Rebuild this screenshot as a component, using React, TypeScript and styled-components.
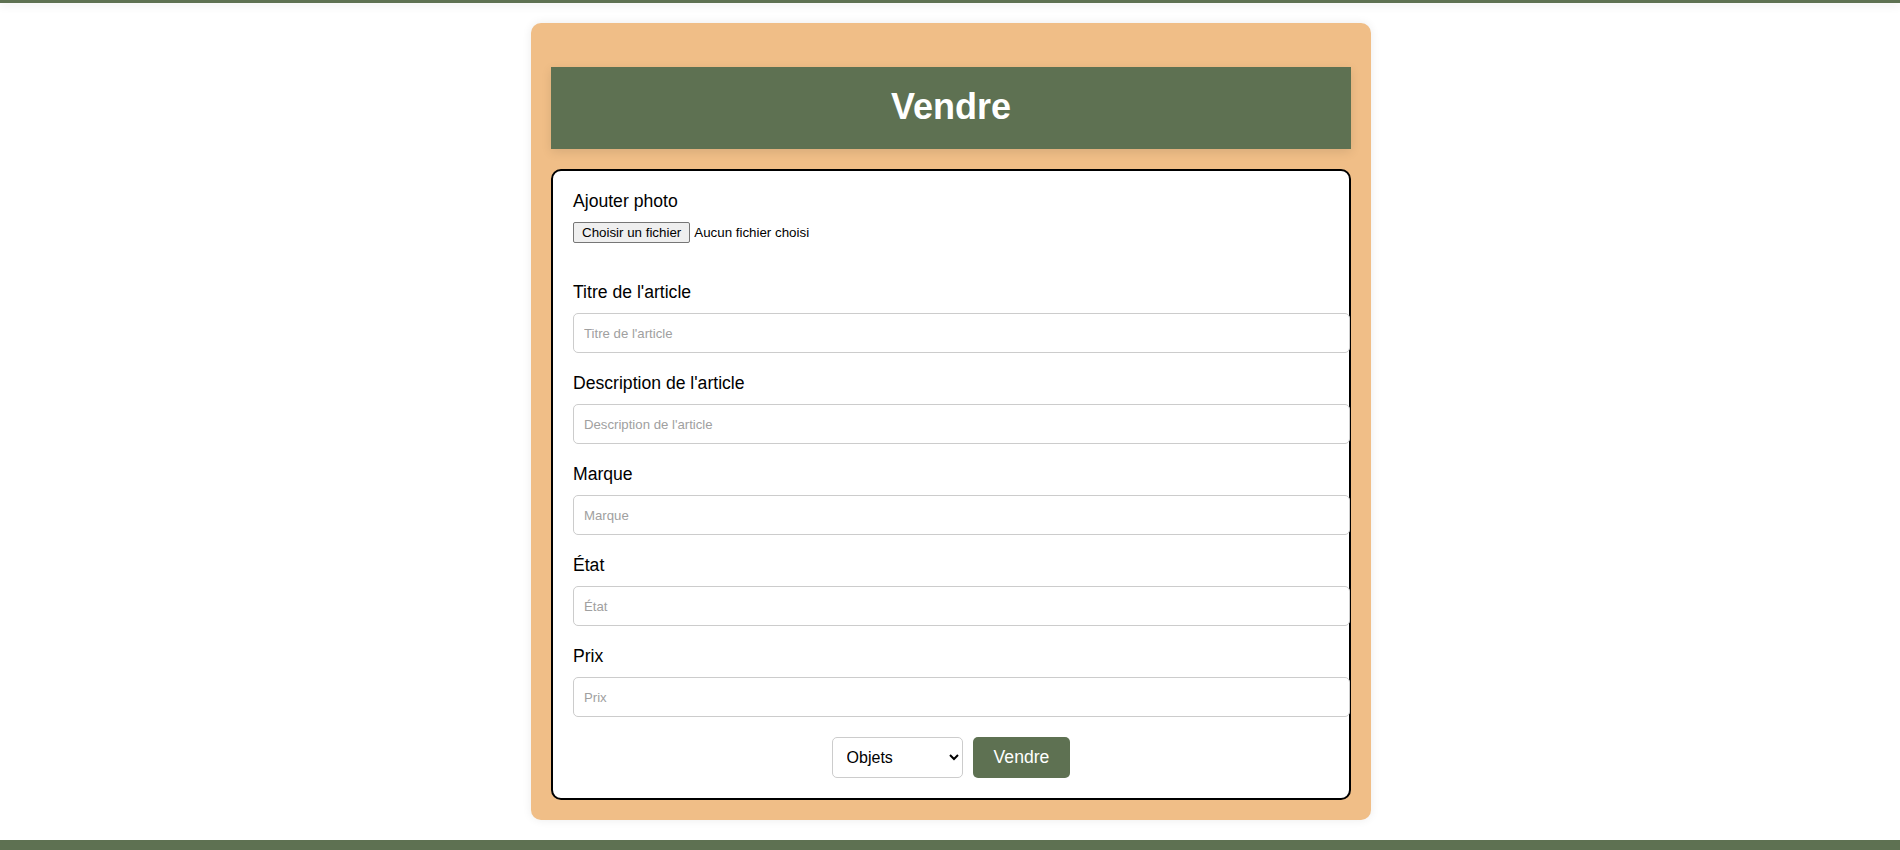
import React from "react";
import styled, { createGlobalStyle } from "styled-components";

const GREEN = "#5e7152";
const ORANGE = "#f0be87";

const GlobalStyle = createGlobalStyle`
  html, body {
    margin: 0;
    padding: 0;
    background: #ffffff;
    font-family: "Liberation Sans", Arial, sans-serif;
    color: #000;
  }
  * { box-sizing: border-box; }
`;

const Page = styled.div`
  height: 100vh;
  overflow: hidden;
  display: flex;
  flex-direction: column;
`;

const TopBar = styled.header`
  height: 3px;
  flex-shrink: 0;
  background: ${GREEN};
  box-shadow: 0 2px 10px rgba(0, 0, 0, 0.12);
  position: relative;
  z-index: 1;
`;

const Main = styled.main`
  display: flex;
  justify-content: center;
  padding: 20px 0 20px 2px;
  flex-shrink: 0;
`;

const Card = styled.section`
  width: 840px;
  background: ${ORANGE};
  border-radius: 10px;
  padding: 44px 20px 20px;
  box-shadow: 0 0 10px rgba(0, 0, 0, 0.08);
`;

const Title = styled.h1`
  margin: 0 0 20px;
  padding: 20px 0 22px;
  background: ${GREEN};
  color: #ffffff;
  text-align: center;
  font-size: 36px;
  line-height: 40px;
  font-weight: 700;
  box-shadow: 0 3px 10px rgba(0, 0, 0, 0.1);
`;

const Form = styled.form`
  background: #ffffff;
  border: 2px solid #000;
  border-radius: 10px;
  padding: 20px;
  display: flex;
  flex-direction: column;
`;

const Field = styled.div<{ $extra?: number }>`
  display: flex;
  flex-direction: column;
  align-items: flex-start;
  margin-bottom: ${(p) => 20 + (p.$extra ?? 0)}px;
`;

const Label = styled.label`
  display: block;
  font-size: 17.6px;
  line-height: 21px;
  margin-bottom: 10px;
  color: #000;
`;

const FileRow = styled.label`
  display: flex;
  align-items: center;
  gap: 4px;
  font-size: 13.33px;
  line-height: 15px;
  cursor: pointer;
`;

const FileButton = styled.span`
  display: inline-block;
  padding: 2px 8px;
  border: 1px solid #767676;
  border-radius: 2px;
  background: #efefef;
  color: #000;
  font-size: 13.33px;
  line-height: 15px;
`;

const FileStatus = styled.span`
  color: #000;
`;

const HiddenFile = styled.input`
  display: none;
`;

const TextInput = styled.input`
  width: calc(100% + 21px);
  height: 40px;
  padding: 0 10px;
  border: 1px solid #cccccc;
  border-radius: 5px;
  font-family: "Liberation Sans", Arial, sans-serif;
  font-size: 13.2px;
  color: #333;
  background: #fff;
  outline: none;
  &::placeholder {
    color: #a0a0a0;
  }
`;

const Actions = styled.div`
  display: flex;
  justify-content: center;
  gap: 10px;
`;

const Select = styled.select`
  width: 131px;
  height: 41px;
  padding: 0 10px;
  border: 1px solid #cccccc;
  border-radius: 5px;
  background: #ffffff;
  font-family: "Liberation Sans", Arial, sans-serif;
  font-size: 16px;
  color: #000;
`;

const SubmitButton = styled.button`
  height: 41px;
  padding: 0 21px;
  border: none;
  border-radius: 5px;
  background: ${GREEN};
  color: #ffffff;
  font-family: "Liberation Sans", Arial, sans-serif;
  font-size: 17.6px;
  cursor: pointer;
`;

const Footer = styled.footer`
  flex-shrink: 0;
  height: 60px;
  background: ${GREEN};
`;

const fields = [
  { id: "titre", label: "Titre de l'article" },
  { id: "description", label: "Description de l'article" },
  { id: "marque", label: "Marque" },
  { id: "etat", label: "État" },
  { id: "prix", label: "Prix" },
];

export default function App() {
  return (
    <>
      <GlobalStyle />
      <Page>
        <TopBar />
        <Main>
          <Card>
            <Title>Vendre</Title>
            <Form onSubmit={(e) => e.preventDefault()}>
              <Field $extra={19}>
                <Label as="span">Ajouter photo</Label>
                <FileRow>
                  <HiddenFile type="file" accept="image/*" />
                  <FileButton>Choisir un fichier</FileButton>
                  <FileStatus>Aucun fichier choisi</FileStatus>
                </FileRow>
              </Field>
              {fields.map((f) => (
                <Field key={f.id}>
                  <Label htmlFor={f.id}>{f.label}</Label>
                  <TextInput id={f.id} type="text" placeholder={f.label} />
                </Field>
              ))}
              <Actions>
                <Select defaultValue="objets">
                  <option value="objets">Objets</option>
                  <option value="vetements">Vêtements</option>
                </Select>
                <SubmitButton type="submit">Vendre</SubmitButton>
              </Actions>
            </Form>
          </Card>
        </Main>
        <Footer />
      </Page>
    </>
  );
}
